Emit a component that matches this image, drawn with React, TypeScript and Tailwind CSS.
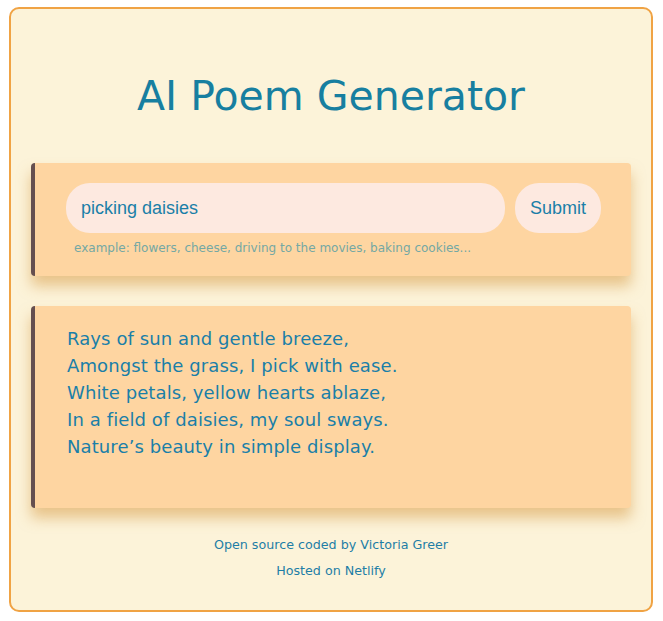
import React from 'react';

const poem = [
  'Rays of sun and gentle breeze,',
  'Amongst the grass, I pick with ease.',
  'White petals, yellow hearts ablaze,',
  'In a field of daisies, my soul sways.',
  'Nature’s beauty in simple display.',
];

export default function App() {
  return (
    <div className="min-h-screen bg-white pt-[7px] pl-[9px] pr-[10px] font-['DejaVu_Sans',sans-serif]">
      <div className="flex h-[605px] flex-col rounded-[10px] border-2 border-[#f0a344] bg-[#fcf3d9] px-5">
        <h1 className="mt-[62px] text-center text-[41px] leading-[50px] text-[#177fa0]">AI Poem Generator</h1>

        <form className="mt-[42px] rounded-[4px] border-l-4 border-[#654f4f] bg-[#fed5a1] pt-5 pl-[31px] pr-[30px] pb-5 shadow-[0_10px_14px_rgba(214,150,60,0.5)]" onSubmit={(e) => e.preventDefault()}>
          <div className="flex gap-[10px]">
            <input
              className="h-[50px] flex-1 rounded-[24px] bg-[#fde9e0] px-[15px] font-['Liberation_Sans',Arial,sans-serif] text-[18px] text-[#1a7fa8] outline-none"
              defaultValue="picking daisies"
            />
            <button className="h-[50px] w-[86px] rounded-[24px] bg-[#fde9e0] font-['Liberation_Sans',Arial,sans-serif] text-[18px] text-[#1a7fa8]">
              Submit
            </button>
          </div>
          <div className="mt-[8px] pl-[8px] text-[12px] leading-[15px] text-[#74a8a4]">
            example: flowers, cheese, driving to the movies, baking cookies...
          </div>
        </form>

        <div className="mt-[30px] h-[202px] rounded-[4px] border-l-4 border-[#654f4f] bg-[#fed5a1] pt-[19px] pl-[32px] shadow-[0_10px_14px_rgba(214,150,60,0.5)]">
          {poem.map((line) => (
            <div key={line} className="text-[18px] leading-[27px] tracking-[0.1px] text-[#1a7fa8]">
              {line}
            </div>
          ))}
        </div>

        <footer className="mt-[24px] text-center text-[12.7px] leading-[26px] text-[#1e7ea6]">
          <div>Open source coded by Victoria Greer</div>
          <div>Hosted on Netlify</div>
        </footer>
      </div>
    </div>
  );
}
